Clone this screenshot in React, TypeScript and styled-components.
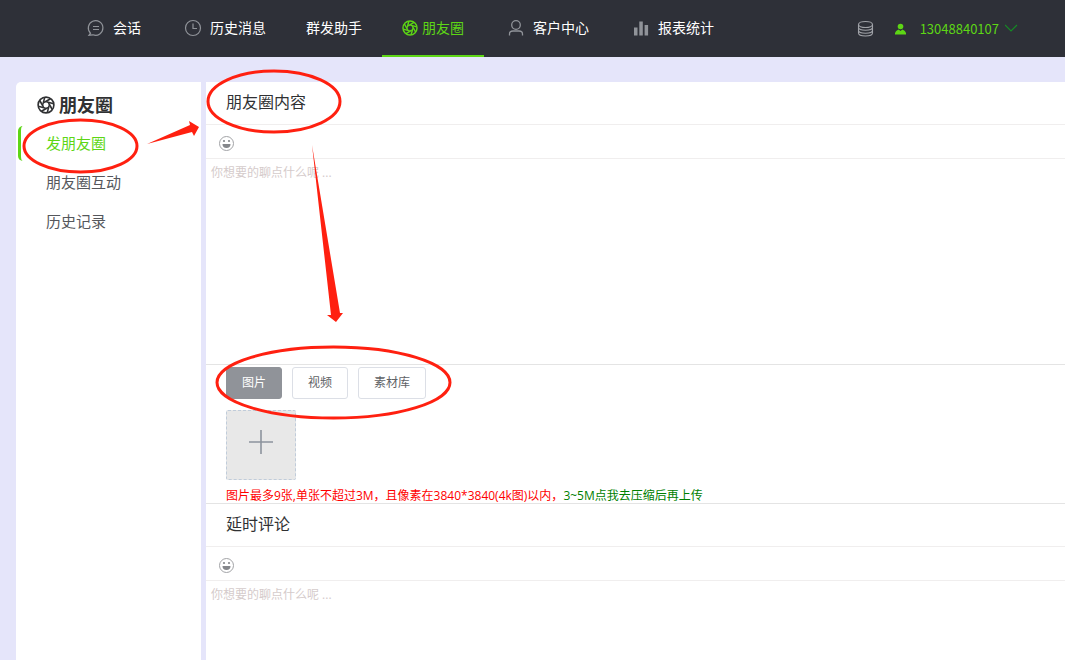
import React from 'react';
import styled, { createGlobalStyle } from 'styled-components';

const GlobalStyle = createGlobalStyle`
  *, *::before, *::after { box-sizing: border-box; }
  body {
    margin: 0;
    background: #e5e5fa;
    color: #303133;
    font-family: "Open Sans", "Noto Sans CJK SC", sans-serif;
    font-size: 14px;
  }
  button, textarea { font-family: inherit; }
`;

const Page = styled.div`
  position: relative;
  display: flex;
  flex-direction: column;
  min-height: 100vh;
  overflow: hidden;
`;

const Header = styled.header`
  display: flex;
  justify-content: space-between;
  height: 57px;
  padding: 0 46px 0 64px;
  background: #2e3038;
`;

const Nav = styled.nav`
  display: flex;
`;

const NavLink = styled.a<{ $active?: boolean }>`
  display: flex;
  align-items: center;
  gap: ${(p) => (p.$active ? 4 : 5)}px;
  padding: 0 20px;
  border-bottom: 2px solid ${(p) => (p.$active ? '#5dd615' : 'transparent')};
  color: ${(p) => (p.$active ? '#5dd615' : '#fff')};
  font-size: 14px;
  line-height: 20px;
  white-space: nowrap;
  text-decoration: none;
`;

const IconBox = styled.span`
  display: flex;
  justify-content: center;
  width: 24px;
  color: #909399;
`;

const Account = styled.div`
  display: flex;
  align-items: center;
  color: #5dd615;
`;

const PlainButton = styled.button`
  display: flex;
  align-items: center;
  padding: 0;
  border: 0;
  background: none;
  color: #a0a2a8;
  cursor: pointer;
`;

const AccountButton = styled(PlainButton)`
  gap: 14px;
  margin-left: 20px;
  color: #5dd615;
  font-family: "Noto Sans CJK SC", sans-serif;
  font-size: 13px;
  line-height: 20px;
`;

const Phone = styled.span`
  display: flex;
  align-items: center;
  gap: 6px;
`;

const Body = styled.div`
  display: flex;
  flex: 1;
  gap: 5px;
  padding: 25px 0 0 16px;
`;

const Sidebar = styled.aside`
  flex: 0 0 185px;
  padding: 11px 2px;
  border-radius: 5px 0 0 0;
  background: #fff;
`;

const SideTitle = styled.h1`
  display: flex;
  align-items: center;
  gap: 4px;
  margin: 0 0 9px;
  padding-left: 19px;
  font-size: 18px;
  font-weight: 700;
  line-height: 24px;
`;

const SideMenu = styled.nav`
  display: flex;
  flex-direction: column;
  gap: 4px;
`;

const SideLink = styled.a<{ $active?: boolean }>`
  padding-left: 25px;
  border-left: 3px solid ${(p) => (p.$active ? '#5dd615' : 'transparent')};
  border-radius: 5px;
  color: ${(p) => (p.$active ? '#5dd615' : '#55575c')};
  font-size: 15px;
  line-height: 35px;
  text-decoration: none;
`;

const Content = styled.main`
  display: flex;
  flex: 1;
  flex-direction: column;
  min-width: 0;
  background: #fff;
`;

const Section = styled.section<{ $grow?: boolean }>`
  display: flex;
  flex: ${(p) => (p.$grow ? '1' : 'none')};
  flex-direction: column;
`;

const SectionTitle = styled.h2`
  margin: 0;
  padding: 0 20px 2px;
  border-bottom: 1px solid #f0eeee;
  font-size: 16px;
  font-weight: 400;
  line-height: 40px;
`;

const Toolbar = styled.div`
  display: flex;
  align-items: center;
  height: 34px;
  padding: 3px 13px 0;
  border-bottom: 1px solid #f0eeee;
`;

const Editor = styled.textarea<{ $grow?: boolean }>`
  display: block;
  flex: ${(p) => (p.$grow ? '1' : 'none')};
  width: 100%;
  height: ${(p) => (p.$grow ? 'auto' : '206px')};
  padding: 4px 5px;
  border: 0;
  border-bottom: ${(p) => (p.$grow ? '0' : '1px solid #e4e4e4')};
  outline: 0;
  resize: none;
  background: #fff;
  font-size: 12px;
  line-height: 20px;
  &::placeholder { color: #d5cbcb; opacity: 1; }
`;

const Attachments = styled.div`
  padding: 2px 20px 0;
  border-bottom: 1px solid #e4e4e4;
`;

const ButtonRow = styled.div`
  display: flex;
  gap: 10px;
  margin-bottom: 11px;
`;

const TypeButton = styled.button<{ $active?: boolean }>`
  height: 32px;
  padding: 0 15px;
  border: 1px solid ${(p) => (p.$active ? '#909399' : '#dcdfe6')};
  border-radius: 3px;
  background: ${(p) => (p.$active ? '#909399' : '#fff')};
  color: ${(p) => (p.$active ? '#fff' : '#606266')};
  font-size: 12px;
  line-height: 28px;
  cursor: pointer;
`;

const Upload = styled.button`
  display: flex;
  align-items: center;
  justify-content: center;
  width: 70px;
  height: 70px;
  padding: 0 0 6px;
  border: 1px dashed #c0ccda;
  border-radius: 2px;
  background: #e8e8e8;
  color: #8c939d;
`;

const Hint = styled.p`
  margin: 0;
  padding-top: 9px;
  color: #f00;
  font-size: 12px;
  line-height: 14px;
`;

const HintLink = styled.a`
  color: #008000;
  text-decoration: none;
`;

const Annotations = styled.svg`
  position: absolute;
  top: 0;
  left: 0;
  pointer-events: none;
`;

const ChatIcon = () => (
  <svg width="18" height="18" viewBox="0 0 18 18" fill="none" stroke="currentColor" strokeWidth="1.2">
    <path d="M3.5 14.2A7.3 7.3 0 1 1 6 15.8L2 16.2Z M6 7.5h6M6 10.5h6" />
  </svg>
);

const ClockIcon = () => (
  <svg width="18" height="18" viewBox="0 0 18 18" fill="none" stroke="currentColor" strokeWidth="1.2">
    <circle cx="9" cy="9" r="7.5" />
    <path d="M9 4.5V9.500H13" />
  </svg>
);

const PersonIcon = () => (
  <svg width="18" height="18" viewBox="0 0 18 18" fill="none" stroke="currentColor" strokeWidth="1.3">
    <circle cx="9" cy="6" r="4.300" />
    <path d="M2.500 16.500V15Q2.500 12 6 12H12Q15.500 12 15.500 15V16.500" />
  </svg>
);

const ChartIcon = () => (
  <svg width="18" height="18" viewBox="0 0 18 18" fill="currentColor">
    <path d="M2 8.500h3.500V16.500H2z M7.300 2.500h3.500v14H7.300z M12.600 6h3.500v10.500h-3.500z" />
  </svg>
);

const ApertureIcon = ({ size }: { size: number }) => (
  <svg width={size} height={size} viewBox="0 0 18 18" fill="none" stroke="currentColor" strokeWidth="1.6">
    <circle cx="9" cy="9" r="7.900" />
    {[0, 45, 90, 135, 180, 225, 270, 315].map((angle) => (
      <path key={angle} d="M7 6.500L13.500 2.700" transform={`rotate(${angle} 9 9)`} />
    ))}
  </svg>
);

const DatabaseIcon = () => (
  <svg width="18" height="18" viewBox="0 0 18 18" fill="none" stroke="currentColor" strokeWidth="1.1">
    <ellipse cx="9.500" cy="4.500" rx="7" ry="3" />
    <path d="M2.500 4.500v8.500c0 4 14 4 14 0V4.500M2.500 7.300c0 4 14 4 14 0M2.500 10.200c0 4 14 4 14 0" />
  </svg>
);

const UserIcon = () => (
  <svg width="12" height="12" viewBox="0 0 12 12" fill="currentColor">
    <circle cx="6.500" cy="3.500" r="2.800" />
    <path d="M1 11.500V10Q1.500 7.500 4.500 6.500L6.500 8L8.500 6.500Q11.500 7.500 12 10V11.500Z" />
  </svg>
);

const ChevronIcon = () => (
  <svg width="14" height="14" viewBox="0 0 14 14" fill="none" stroke="#158a25" strokeWidth="1.2">
    <path d="M0 3l6 6L12 3" />
  </svg>
);

const SmileIcon = () => (
  <svg width="16" height="16" viewBox="0 0 16 16" fill="none" stroke="#a2a3a6">
    <circle cx="7.500" cy="8.500" r="7" />
    <path d="M3.500 9h8a4 4 0 0 1-8 0z" fill="#85878b" stroke="none" />
    <circle cx="5" cy="6" r="1.100" fill="#85878b" stroke="none" />
    <circle cx="10" cy="6" r="1.100" fill="#85878b" stroke="none" />
  </svg>
);

const PlusIcon = () => (
  <svg width="26" height="26" viewBox="0 0 26 26" stroke="currentColor" strokeWidth="1.600">
    <path d="M13 1v24M1 13h24" />
  </svg>
);

const EmojiBar = () => (
  <Toolbar>
    <PlainButton type="button" aria-label="表情">
      <SmileIcon />
    </PlainButton>
  </Toolbar>
);

const navItems = [
  { label: '会话', Icon: ChatIcon },
  { label: '历史消息', Icon: ClockIcon },
  { label: '群发助手' },
  { label: '朋友圈', active: true },
  { label: '客户中心', Icon: PersonIcon },
  { label: '报表统计', Icon: ChartIcon },
];

export default function App() {
  return (
    <Page>
      <GlobalStyle />
      <Header>
        <Nav>
          {navItems.map(({ label, Icon, active }) => (
            <NavLink key={label} href="#" $active={active}>
              {active && <ApertureIcon size={16} />}
              {Icon && <IconBox><Icon /></IconBox>}
              {label}
            </NavLink>
          ))}
        </Nav>
        <Account>
          <PlainButton type="button" aria-label="数据">
            <DatabaseIcon />
          </PlainButton>
          <AccountButton type="button">
            <UserIcon />
            <Phone>13048840107<ChevronIcon /></Phone>
          </AccountButton>
        </Account>
      </Header>
      <Body>
        <Sidebar>
          <SideTitle><ApertureIcon size={18} />朋友圈</SideTitle>
          <SideMenu>
            <SideLink href="#" $active>发朋友圈</SideLink>
            <SideLink href="#">朋友圈互动</SideLink>
            <SideLink href="#">历史记录</SideLink>
          </SideMenu>
        </Sidebar>
        <Content>
          <Section>
            <SectionTitle>朋友圈内容</SectionTitle>
            <EmojiBar />
            <Editor aria-label="朋友圈内容" placeholder="你想要的聊点什么呢 ..." />
            <Attachments>
              <ButtonRow>
                <TypeButton type="button" $active>图片</TypeButton>
                <TypeButton type="button">视频</TypeButton>
                <TypeButton type="button">素材库</TypeButton>
              </ButtonRow>
              <Upload type="button" aria-label="上传图片"><PlusIcon /></Upload>
              <Hint>
                图片最多9张,单张不超过3M，且像素在3840*3840(4k图)以内，
                <HintLink href="#">3~5M点我去压缩后再上传</HintLink>
              </Hint>
            </Attachments>
          </Section>
          <Section $grow>
            <SectionTitle>延时评论</SectionTitle>
            <EmojiBar />
            <Editor $grow aria-label="延时评论" placeholder="你想要的聊点什么呢 ..." />
          </Section>
        </Content>
      </Body>
      <Annotations width="460" height="430" viewBox="0 0 460 430" fill="none" stroke="#ff2010" strokeWidth="3" aria-hidden="true">
        <ellipse cx="80.500" cy="146" rx="56.500" ry="26" />
        <ellipse cx="274" cy="101.500" rx="66" ry="30.500" />
        <ellipse cx="333.500" cy="382.500" rx="116.500" ry="35.500" />
        <path d="M147 144L190 125L189 121L199 127L194 136L192 132Z" fill="#ff2010" stroke="none" />
        <path d="M312 145L340 313L343 313L336 322L327 315L331 315Z" fill="#ff2010" stroke="none" />
      </Annotations>
    </Page>
  );
}
